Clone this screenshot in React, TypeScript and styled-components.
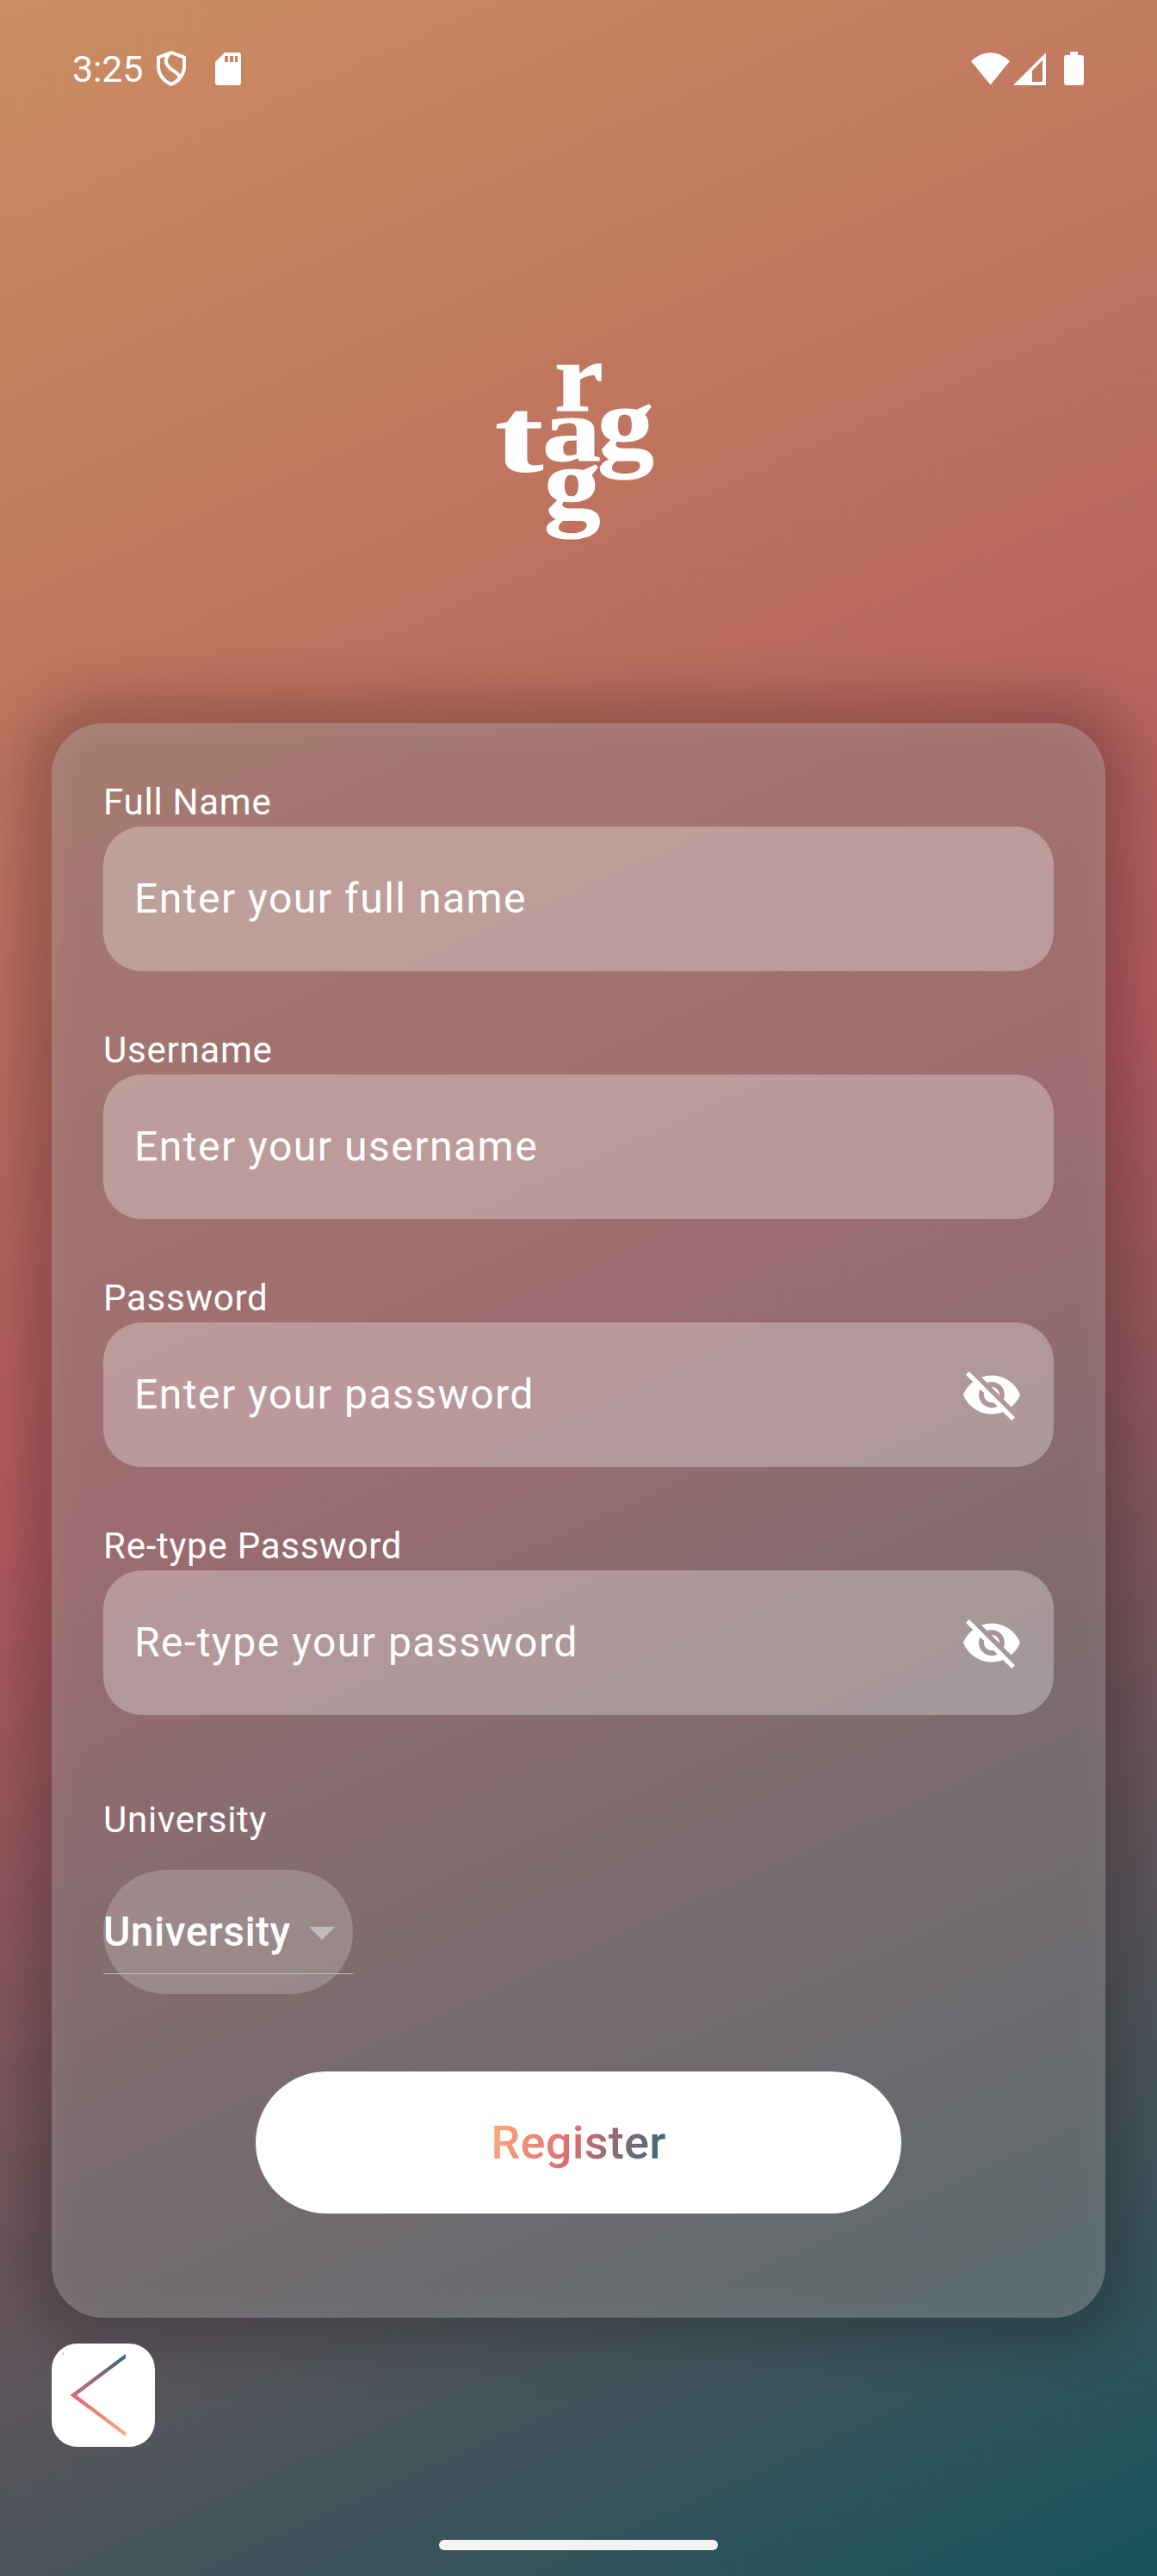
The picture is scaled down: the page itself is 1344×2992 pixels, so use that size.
import React from "react";
import styled, { createGlobalStyle } from "styled-components";
import { MdVisibilityOff } from "react-icons/md";

const Global = createGlobalStyle`
  *, *::before, *::after { box-sizing: border-box; }
  html, body { margin: 0; padding: 0; }
  body { font-family: Roboto, "Liberation Sans", sans-serif; color: #fff; }
`;

const Screen = styled.main`
  width: 1344px;
  height: 2992px;
  display: flex;
  flex-direction: column;
  overflow: hidden;
  background: linear-gradient(155.81deg, #cb8d61 0%, #b1585d 50%, #17525a 100%);
`;

const StatusBar = styled.header`
  height: 159px;
  padding: 0 85px 0 84px;
  display: flex;
  align-items: center;
  justify-content: space-between;
  flex: none;
`;

const StatusGroup = styled.div`
  display: flex;
  align-items: center;
`;

const Clock = styled.span`
  font-size: 43px;
  line-height: 50px;
  letter-spacing: -0.2px;
`;

const Glyph = styled.svg<{ $gap?: number }>`
  display: block;
  flex: none;
  overflow: visible;
  margin-left: ${(p) => p.$gap ?? 0}px;
`;

const Brand = styled.div`
  height: 681px;
  flex: none;
  display: flex;
  justify-content: center;
  padding-top: 261px;
`;

const Mark = styled.svg`
  display: block;
  width: 184px;
  height: 206px;
  margin-right: 8px;
  overflow: visible;
  font-family: "Liberation Serif", "Times New Roman", serif;
  font-weight: 700;
  fill: #fff;
  stroke: #fff;
  stroke-width: 1px;
`;

const Card = styled.form`
  position: relative;
  isolation: isolate;
  width: 1224px;
  height: 1852px;
  flex: none;
  margin: 0 auto;
  padding: 60px;
  border-radius: 60px;
  background: rgba(255, 255, 255, 0.3);
  display: flex;
  flex-direction: column;

  &::before {
    content: "";
    position: absolute;
    z-index: -1;
    inset: -30px;
    border-radius: 90px;
    background: rgba(0, 0, 0, 0.21);
    filter: blur(29px);
  }
`;

const Field = styled.label`
  display: flex;
  flex-direction: column;
  height: 228px;
  margin-bottom: 60px;
`;

const Caption = styled.span`
  height: 60px;
  padding-top: 7px;
  font-size: 42px;
  line-height: 50px;
  letter-spacing: 0.75px;
  white-space: nowrap;
`;

const InputBox = styled.span`
  height: 168px;
  padding: 0 36px;
  border-radius: 45px;
  background: rgba(255, 255, 255, 0.3);
  display: flex;
  align-items: center;
  justify-content: space-between;
`;

const Input = styled.input`
  flex: 1;
  min-width: 0;
  padding: 0;
  border: 0;
  outline: 0;
  background: transparent;
  color: #fff;
  font: 400 48px/56px Roboto, "Liberation Sans", sans-serif;
  letter-spacing: 1.5px;

  &::placeholder { color: #fff; opacity: 1; }
`;

const EyeOff = styled(MdVisibilityOff)`
  width: 72px;
  height: 72px;
  flex: none;
`;

const UniversityBlock = styled.div`
  margin-top: 30px;
  display: flex;
  flex-direction: column;
  align-items: flex-start;
`;

const Select = styled.button`
  width: 290px;
  height: 144px;
  margin-top: 30px;
  padding: 0;
  border: 0;
  border-radius: 72px;
  background: rgba(255, 255, 255, 0.2);
  color: #fff;
  display: flex;
  align-items: center;
`;

const SelectLine = styled.span`
  width: 290px;
  height: 97px;
  border-bottom: 1px solid #bdbdbd;
  display: flex;
  align-items: center;
  justify-content: space-between;
  padding-right: 21px;
  font: 500 48px/56px Roboto, "Liberation Sans", sans-serif;
  letter-spacing: 0.45px;
`;

const Register = styled.button`
  width: 750px;
  height: 165px;
  margin: 90px auto 0;
  padding: 0;
  border: 0;
  border-radius: 83px;
  background: #fff;
`;

const RegisterText = styled.span`
  display: inline-block;
  font: 500 54px/64px Roboto, "Liberation Sans", sans-serif;
  letter-spacing: 0.3px;
  color: transparent;
  background: linear-gradient(107deg, #fdae7c 0%, #da6c75 48%, #27697a 100%);
  background-clip: text;
  -webkit-background-clip: text;
`;

const Back = styled.button`
  position: relative;
  width: 120px;
  height: 120px;
  flex: none;
  margin: 30px 0 0 60px;
  padding: 0;
  border: 0;
  border-radius: 30px;
  background: #fff;
`;

const HomeIndicator = styled.div`
  width: 324px;
  height: 12px;
  margin: auto auto 30px;
  border-radius: 6px;
  background: #f4f4f2;
  flex: none;
`;

type FieldProps = { label: string; placeholder: string; secret?: boolean };

const FormField = ({ label, placeholder, secret }: FieldProps) => (
  <Field>
    <Caption>{label}</Caption>
    <InputBox>
      <Input placeholder={placeholder} type={secret ? "password" : "text"} />
      {secret && <EyeOff />}
    </InputBox>
  </Field>
);

const Logo = () => (
  <Mark viewBox="0 0 184 206" aria-label="tagg">
    <text transform="translate(68 57) scale(1.28 1.14)" fontSize="100">r</text>
    <text transform="translate(-1 127) scale(1.68 1.22)" fontSize="100">t</text>
    <text transform="translate(54 115) scale(1.36 1.04)" fontSize="100">a</text>
    <text transform="translate(118 111) scale(1.31 1.18)" fontSize="100">g</text>
    <text transform="translate(56 180) scale(1.31 1.16)" fontSize="100">g</text>
  </Mark>
);

export default function App() {
  return (
    <>
      <Global />
      <Screen>
        <StatusBar>
          <StatusGroup>
            <Clock>3:25</Clock>
            <Glyph $gap={16} width="34" height="41" viewBox="0 0 34 41" fill="none" stroke="#fff" strokeWidth="4" strokeLinejoin="round">
              <path d="M17 2.2 32 7.6V18C32 27 26 35.500 17 38.800 8 35.500 2 27 2 18V7.600Z" />
              <path d="M15.500 3C8 10 10 16 17 21.500 25 27 29 29 24.500 35" />
            </Glyph>
            <Glyph $gap={34} width="30" height="38" viewBox="0 0 30 38" fill="#fff">
              <path fillRule="evenodd" d="M11 0H27Q30 0 30 3V35Q30 38 27 38H3Q0 38 0 35V11ZM11 4V11H15V4ZM17 4V11H21V4ZM23 4V11H26V4Z" />
            </Glyph>
          </StatusGroup>
          <StatusGroup>
            <Glyph width="45" height="38" viewBox="0 0 45 38" fill="#fff">
              <path d="M0 10Q22.500-10 45 10L22.500 37.500Z" />
            </Glyph>
            <Glyph $gap={4} width="38" height="38" viewBox="0 0 38 38" fill="#fff">
              <path fillRule="evenodd" d="M38 0V38H0ZM34 9 22 21V34H34Z" />
            </Glyph>
            <Glyph $gap={21} width="23" height="39" viewBox="0 0 23 39" fill="#fff">
              <path d="M7 0H16V4H20Q23 4 23 7V36Q23 39 20 39H3Q0 39 0 36V7Q0 4 3 4H7Z" />
            </Glyph>
          </StatusGroup>
        </StatusBar>
        <Brand>
          <Logo />
        </Brand>
        <Card>
          <FormField label="Full Name" placeholder="Enter your full name" />
          <FormField label="Username" placeholder="Enter your username" />
          <FormField label="Password" placeholder="Enter your password" secret />
          <FormField label="Re-type Password" placeholder="Re-type your password" secret />
          <UniversityBlock>
            <Caption>University</Caption>
            <Select type="button">
              <SelectLine>
                University
                <Glyph width="30" height="15" viewBox="0 0 30 15" fill="#bdbdbd">
                  <path d="M0 2H30L15 17Z" />
                </Glyph>
              </SelectLine>
            </Select>
          </UniversityBlock>
          <Register type="button">
            <RegisterText>Register</RegisterText>
          </Register>
        </Card>
        <Back type="button" aria-label="Back">
          <Glyph width="120" height="120" viewBox="0 0 120 120" fill="none">
            <defs>
              <linearGradient id="chevron" x1="0" y1="12" x2="0" y2="108" gradientUnits="userSpaceOnUse">
                <stop offset="0" stopColor="#27697a" />
                <stop offset="0.52" stopColor="#da6c75" />
                <stop offset="1" stopColor="#fdae7c" />
              </linearGradient>
            </defs>
            <path d="M86 12V17L29 60 86 103V108L21.500 60Z" fill="url(#chevron)" />
            <path d="M14 10.500 12.500 12 14 13.500" stroke="#777" strokeWidth="0.800" />
          </Glyph>
        </Back>
        <HomeIndicator />
      </Screen>
    </>
  );
}
